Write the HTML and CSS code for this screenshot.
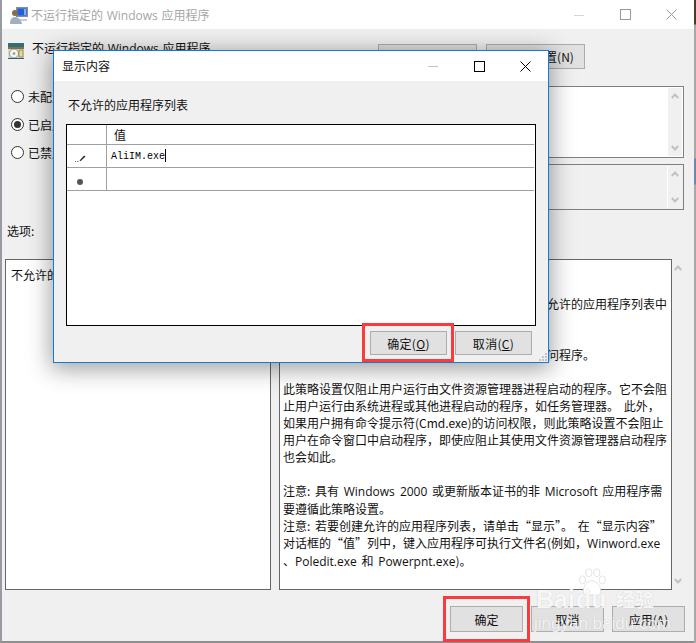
FILE: index.html
```html
<!DOCTYPE html>
<html lang="zh-CN">
<head>
<meta charset="utf-8">
<title>不运行指定的 Windows 应用程序</title>
<link rel="stylesheet" href="styles.css">
</head>
<body>
<div class="window">
  <header class="titlebar">
    <svg class="title-icon" width="20" height="20" viewBox="0 0 20 20">
      <rect x="7" y="2" width="12" height="10" fill="#7f8fa8"/>
      <rect x="8.5" y="3.5" width="9" height="7" fill="#1f5fe0"/>
      <rect x="15" y="4" width="2" height="6" fill="#7fb0f0"/>
      <circle cx="6" cy="8" r="3" fill="#8a6a48"/>
      <path d="M1 19c0-5 2-7 5-7s6 2 7 7z" fill="#9fb0c4"/>
      <path d="M11 14h7v2h-7z" fill="#c4ccd6"/>
    </svg>
    <span class="title-text">不运行指定的 <span class="lat">Windows</span> 应用程序</span>
    <div class="controls">
      <span class="ctl"><svg width="10" height="10" viewBox="0 0 10 10"><path d="M0 5.500h10" stroke="#d6d6d6"/></svg></span>
      <span class="ctl"><svg width="11" height="11" viewBox="0 0 11 11"><rect x=".5" y=".5" width="10" height="10" fill="none" stroke="#999"/></svg></span>
      <span class="ctl"><svg width="11" height="11" viewBox="0 0 11 11"><path d="M.5.500l10 10M10.500.500l-10 10" stroke="#999" fill="none"/></svg></span>
    </div>
  </header>

  <div class="body">
    <div class="policy-head">
      <svg class="policy-icon" width="16" height="16" viewBox="0 0 16 16">
        <rect width="16" height="16" fill="#d8d8c8"/>
        <rect width="16" height="4" fill="#2f6f78"/>
        <rect y="4" width="16" height="2" fill="#8a6f3a"/>
        <circle cx="6" cy="10.500" r="4.500" fill="#f4f4ec" stroke="#6b7a80" stroke-width=".7"/>
        <circle cx="6" cy="10.500" r="1.300" fill="#7f9aa0"/>
        <rect x="11" y="7" width="4" height="7" fill="#e8d890" stroke="#6a6a50" stroke-width=".6"/>
        <rect y="15" width="16" height="1" fill="#30606a"/>
      </svg>
      <span class="policy-name">不运行指定的 <span class="lat">Windows</span> 应用程序</span>
      <div class="head-buttons">
        <button class="btn btn-nav">上一个设置(P)</button>
        <button class="btn btn-nav">下一个设置(N)</button>
      </div>
    </div>

    <div class="state">
      <div class="radios">
        <div class="radio-row"><span class="radio"></span>未配置(C)</div>
        <div class="radio-row"><span class="radio on"></span>已启用(E)</div>
        <div class="radio-row"><span class="radio"></span>已禁用(D)</div>
      </div>
      <div class="meta">
        <div class="meta-box comment">
          <div class="scroll scroll-boxed">
            <svg width="8" height="6" viewBox="0 0 8 6"><path d="M.8 5L4 1.500 7.200 5" class="chev"/></svg>
            <svg width="8" height="6" viewBox="0 0 8 6"><path d="M.8 1L4 4.500 7.200 1" class="chev"/></svg>
          </div>
        </div>
        <div class="meta-box platform">
          <div class="scroll scroll-boxed">
            <svg width="8" height="6" viewBox="0 0 8 6"><path d="M.8 5L4 1.500 7.200 5" class="chev"/></svg>
            <svg width="8" height="6" viewBox="0 0 8 6"><path d="M.8 1L4 4.500 7.200 1" class="chev"/></svg>
          </div>
        </div>
      </div>
    </div>

    <div class="section-labels">
      <span class="label-left">选项:</span>
      <span>帮助:</span>
    </div>

    <div class="panels">
      <div class="panel options">不允许的应用程序列表</div>
      <div class="help-wrap">
        <div class="panel help">
          <p>此策略设置阻止 Windows 运行指定的程序。</p>
          <p class="gap">如果启用此策略设置，则用户无法运行已添加到不允许的应用程序列表中<br>的程序。</p>
          <p class="gap">如果禁用或未配置此策略设置，则用户可运行和访问程序。</p>
          <p class="gap">此策略设置仅阻止用户运行由文件资源管理器进程启动的程序。它不会阻<br>止用户运行由系统进程或其他进程启动的程序，如任务管理器。 此外，<br>如果用户拥有命令提示符(Cmd.exe)的访问权限，则此策略设置不会阻止<br>用户在命令窗口中启动程序，即使应阻止其使用文件资源管理器启动程序<br>也会如此。</p>
          <p>注意: 具有 <span class="lat">Windows 2000</span> 或更新版本证书的非 <span class="lat">Microsoft</span> 应用程序需<br>要遵循此策略设置。<br>注意: 若要创建允许的应用程序列表，请单击“显示”。 在“显示内容”<br>对话框的“值”列中，键入应用程序可执行文件名(例如，<span class="lat">Winword.exe</span><br>、<span class="lat">Poledit.exe</span> 和 <span class="lat">Powerpnt.exe</span>)。</p>
        </div>
        <div class="scroll">
          <svg width="8" height="6" viewBox="0 0 8 6"><path d="M.8 5L4 1.500 7.200 5" class="chev"/></svg>
          <svg width="8" height="6" viewBox="0 0 8 6"><path d="M.8 1L4 4.500 7.200 1" class="chev"/></svg>
        </div>
      </div>
    </div>

    <footer class="footer">
      <button class="btn btn-foot mark-wrap">确定<span class="mark mark-foot"></span></button>
      <button class="btn btn-foot">取消</button>
      <button class="btn btn-foot">应用(A)</button>
    </footer>
  </div>
</div>

<section class="dialog">
  <header class="dlg-title">
    <span class="dlg-title-text">显示内容</span>
    <div class="controls">
      <span class="ctl"><svg width="10" height="10" viewBox="0 0 10 10"><path d="M0 5.500h10" stroke="#c4c4c4"/></svg></span>
      <span class="ctl"><svg width="11" height="11" viewBox="0 0 11 11"><rect x=".5" y=".5" width="10" height="10" fill="none" stroke="#000"/></svg></span>
      <span class="ctl"><svg width="11" height="11" viewBox="0 0 11 11"><path d="M.5.500l10 10M10.500.500l-10 10" stroke="#000" fill="none"/></svg></span>
    </div>
  </header>
  <div class="dlg-body">
    <div class="dlg-label">不允许的应用程序列表</div>
    <table class="grid">
      <tr class="grid-head"><th class="gutter"></th><th class="value-head">值</th></tr>
      <tr class="grid-row">
        <td class="gutter">
          <svg width="11" height="8" viewBox="0 0 11 8"><path d="M4.500 6.500L9 1.500l1.500 1-5 4.700z" fill="#333"/><path d="M0 7.500h1M2 7.500h1.500" stroke="#777"/></svg>
        </td>
        <td class="value-cell">AliIM.exe<span class="caret"></span></td>
      </tr>
      <tr class="grid-row">
        <td class="gutter"><span class="new-dot"></span></td>
        <td class="value-cell"></td>
      </tr>
      <tr class="grid-fill"><td colspan="2"></td></tr>
    </table>
    <div class="dlg-actions">
      <button class="btn btn-dlg mark-wrap">确定(<u>O</u>)<span class="mark mark-dlg"></span></button>
      <button class="btn btn-dlg">取消(<u>C</u>)</button>
    </div>
  </div>
  <svg class="grip" width="9" height="9" viewBox="0 0 9 9"><path d="M6 0h2v2H6zM3 3h2v2H3zM6 3h2v2H6zM0 6h2v2H0zM3 6h2v2H3zM6 6h2v2H6z" fill="#c4c4c4"/></svg>
</section>

<div class="watermark">
  <svg class="paw" width="32" height="30" viewBox="0 0 36 38">
    <g fill="#fff" stroke="#dcdcdc" stroke-width="1">
      <ellipse cx="6" cy="15" rx="4" ry="5"/>
      <ellipse cx="14" cy="6" rx="4" ry="5"/>
      <ellipse cx="24" cy="6" rx="4" ry="5"/>
      <ellipse cx="31" cy="15" rx="4" ry="5"/>
      <path d="M18 16c-6 0-11 7-11 13 0 6 6 7 11 5 5 2 11 1 11-5 0-6-5-13-11-13z"/>
    </g>
  </svg>
  <span class="wm-bai">Bai</span><span class="wm-du">du</span><span class="wm-jy">经验</span>
  <div class="wm-url">jingyan.baidu.com</div>
</div>
</body>
</html>
```

FILE: styles.css
```css
* { box-sizing: border-box; }
html, body { margin: 0; height: 100%; }
body {
  width: 696px;
  height: 643px;
  overflow: hidden;
  position: relative;
  font: 12px/17px "Noto Sans CJK SC", "Noto Sans", sans-serif;
  color: #111;
  background: linear-gradient(#4a3a2a 0, #4a3a2a 24px, #a8a8a8 25px, #a8a8a8 158px, #6f87a8 159px, #6f87a8 184px, #a8a8a8 185px);
}
.lat { font-family: "Open Sans", sans-serif; }
.window {
  width: 694px;
  height: 643px;
  background: #f0f0f0;
  border-left: 2px solid #9a9aa2;
  border-bottom: 2px solid #8f8f8f;
  display: flex;
  flex-direction: column;
}
.titlebar {
  height: 29px;
  background: #fff;
  display: flex;
  align-items: center;
  flex: none;
}
.title-icon { margin-left: 7px; }
.title-text { margin-left: 2px; color: #a6a6a6; word-spacing: 1px; }
.controls { margin-left: auto; display: flex; height: 100%; }
.ctl { width: 46px; display: flex; align-items: center; justify-content: center; }
.ctl svg { display: block; }

.body { flex: 1; display: flex; flex-direction: column; padding: 0 9px 0 3px; }
.policy-head { height: 48px; display: flex; align-items: flex-start; flex: none; position: relative; }
.policy-icon { margin: 14px 0 0 3px; }
.policy-name { margin: 10px 0 0 8px; word-spacing: 1px; }
.head-buttons { margin: 15px 0 0 auto; display: flex; gap: 9px; padding-right: 100px; }
.btn {
  font: inherit;
  color: #111;
  background: #e1e1e1;
  border: 1px solid #adadad;
  padding: 0;
  position: relative;
}
.btn-nav { width: 99px; height: 25px; }

.state { height: 133px; display: flex; flex: none; }
.radios { width: 274px; padding-top: 11px; display: flex; flex-direction: column; gap: 11px; }
.radio-row { display: flex; align-items: center; gap: 4px; height: 17px; padding-left: 6px; }
.radio {
  width: 13px; height: 13px; border: 1px solid #333; border-radius: 50%;
  background: #fff; display: flex; align-items: center; justify-content: center; flex: none;
}
.radio.on::after { content: ""; width: 7px; height: 7px; border-radius: 50%; background: #333; }
.meta { flex: 1; padding-top: 9px; display: flex; flex-direction: column; gap: 6px; }
.meta-box { border: 1px solid #7f7f7f; display: flex; justify-content: flex-end; width: 405px; }
.comment { height: 72px; background: #fff; }
.platform { height: 46px; background: #f0f0f0; }
.scroll {
  width: 12px;
  flex: none;
  display: flex;
  flex-direction: column;
  justify-content: space-between;
  align-items: center;
  padding: 6px 0;
}
.scroll-boxed { width: 15px; margin: 1px 1px 1px 0; background: #f0f0f0; border-left: 1px solid #fff; padding: 5px 0; }
.chev { fill: none; stroke: #c2c2c2; stroke-width: 2; }

.section-labels { height: 49px; display: flex; flex: none; padding-top: 12px; }
.label-left { width: 274px; padding-left: 2px; }
.panels { height: 331px; display: flex; gap: 8px; flex: none; }
.panel { background: #fff; border: 1px solid #666; }
.options { width: 266px; padding: 6px 5px; }
.help-wrap { display: flex; flex: 1; }
.help { width: 393px; padding: 1px 3px; white-space: nowrap; word-spacing: 2px; }
.help p { margin: 0; }
.help .gap { margin: 0 0 17px; }
.help p:first-child { margin-bottom: 17px; }

.footer { flex: 1; display: flex; justify-content: flex-end; gap: 8px; padding-top: 16px; }
.btn-foot { width: 73px; height: 26px; }
.mark { position: absolute; border: 3px solid #f93a3e; pointer-events: none; }
.mark-foot { left: -8px; top: -11px; width: 87px; height: 46px; }
.mark-dlg { left: -9px; top: -9px; width: 92px; height: 39px; }

.dialog {
  position: absolute;
  left: 53px;
  top: 50px;
  width: 496px;
  height: 313px;
  background: #f0f0f0;
  border: 1px solid #0f7bd6;
  box-shadow: 0 4px 22px 2px rgba(0, 0, 0, .38);
}
.dlg-title { height: 30px; background: #fff; display: flex; align-items: center; }
.dlg-title-text { margin: 0 0 2px 8px; }
.dlg-body { padding: 15px 12px 0; }
.dlg-label { height: 17px; margin: 0 0 11px 2px; }
.grid {
  width: 470px;
  height: 202px;
  border: 1px solid #000;
  border-collapse: separate;
  border-spacing: 0;
  background: #fff;
  padding: 0 1px 0 0;
}
.grid th, .grid td { padding: 0; font-weight: normal; }
.grid-head { height: 20px; }
.grid-row { height: 23px; }
.grid-head th, .grid-row td { border-bottom: 1px solid #a0a0a0; }
.gutter { width: 40px; border-right: 1px solid #a0a0a0; text-align: center; vertical-align: middle; }
.gutter svg { display: inline-block; vertical-align: middle; margin-left: -13px; }
.value-head { text-align: left; padding-left: 7px !important; }
.value-cell { padding: 1px 0 0 4px !important; font: 10px/16px "Liberation Mono", monospace; color: #000; }
.caret { display: inline-block; width: 1px; height: 13px; background: #000; vertical-align: middle; }
.new-dot { display: inline-block; width: 6px; height: 6px; border-radius: 50%; background: #555; margin-left: -14px; }
.grid-fill { height: auto; }
.dlg-actions { display: flex; justify-content: flex-end; gap: 8px; padding: 5px 4px 0 0; }
.btn-dlg { width: 77px; height: 24px; letter-spacing: .3px; }
.grip { position: absolute; right: 0; bottom: 0; }

.watermark {
  position: absolute;
  left: 534px;
  top: 567px;
  width: 130px;
  height: 66px;
  color: rgba(255, 255, 255, .9);
  pointer-events: none;
  font-family: "Liberation Sans", sans-serif;
  text-shadow: 0 0 1px rgba(0, 0, 0, .2);
}
.paw { position: absolute; left: 42px; top: 1px; }
.wm-bai { position: absolute; left: 2px; top: 19px; font: bold 25px/26px "Liberation Sans", sans-serif; }
.wm-du { position: absolute; left: 42px; top: 19px; font: bold 25px/26px "Liberation Sans", sans-serif; }
.wm-jy { position: absolute; left: 82px; top: 20px; font: bold 19px/24px "Noto Sans CJK SC", sans-serif; }
.wm-url { position: absolute; left: 0; top: 47px; font-size: 17px; line-height: 19px; white-space: nowrap; color: rgba(255, 255, 255, .85); }
```
